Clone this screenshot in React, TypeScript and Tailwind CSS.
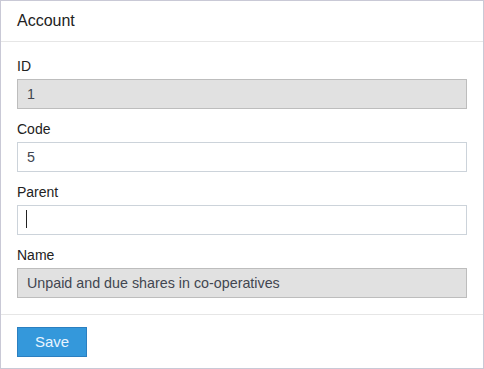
import { useState } from 'react';

interface Field {
  label: string;
  value: string;
  disabled?: boolean;
  caret?: boolean;
}

const fields: Field[] = [
  { label: 'ID', value: '1', disabled: true },
  { label: 'Code', value: '5' },
  { label: 'Parent', value: '', caret: true },
  { label: 'Name', value: 'Unpaid and due shares in co-operatives', disabled: true },
];

export default function App() {
  const [values, setValues] = useState(fields.map((f) => f.value));

  return (
    <main className="h-[369px] w-[484px] bg-white font-['Liberation_Sans',Arial,sans-serif] text-[#222]">
      <div className="flex h-full flex-col border border-[#c9c9d6]">
        <header className="flex h-[41px] items-center border-b border-[#e6e6e6] px-4 text-[16px]">
          Account
        </header>
        <form className="flex flex-col px-4 pt-[14px] pb-4" onSubmit={(e) => e.preventDefault()}>
          {fields.map((field, i) => (
            <label className={i > 0 ? 'mt-[10px] block' : 'block'} key={field.label}>
              <span className="mb-[3px] block h-5 text-[14px] leading-5">{field.label}</span>
              <div className="relative">
                <input
                  className={
                    field.disabled
                      ? 'block h-[30px] w-full border border-[#bdbdbd] bg-[#e1e1e1] px-[9px] text-[14.3px] text-[#424650] outline-none'
                      : 'block h-[30px] w-full border border-[#ccd3da] bg-white px-[9px] text-[14.3px] text-[#424650] outline-none'
                  }
                  disabled={field.disabled}
                  onChange={(e) => setValues((v) => v.map((x, j) => (j === i ? e.target.value : x)))}
                  value={values[i]}
                />
                {field.caret && values[i] === '' ? (
                  <span className="pointer-events-none absolute top-[5px] left-[9px] h-[18px] w-px bg-[#222]" />
                ) : null}
              </div>
            </label>
          ))}
        </form>
        <footer className="border-t border-[#e6e6e6] px-4 pt-3">
          <button
            className="h-[30px] w-[70px] border border-[#2b7fc0] bg-[#3498db] text-[15px] text-[#e8f4ff]"
            type="button"
          >
            Save
          </button>
        </footer>
      </div>
    </main>
  );
}
